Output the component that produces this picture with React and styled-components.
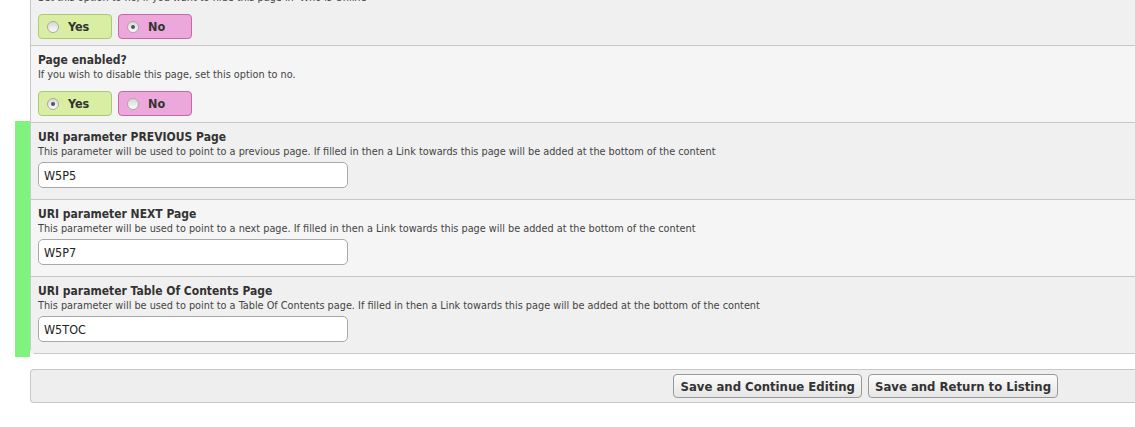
import React from 'react';
import styled, { createGlobalStyle, css } from 'styled-components';

const GlobalStyle = createGlobalStyle`
  html, body {
    margin: 0;
    padding: 0;
    background: #fff;
    overflow: hidden;
  }
  body {
    font-family: "DejaVu Sans Condensed", "DejaVu Sans", sans-serif;
    color: #333;
  }
`;

const Page = styled.div`
  box-sizing: border-box;
  margin-top: -31px;
  padding-left: 30px;
  width: 1170px;
`;

const Panel = styled.div`
  border-left: 1px solid #c8c8c8;
  border-bottom: 1px solid #c8c8c8;
  border-bottom-left-radius: 5px;
`;

// green "changed" strip beside the edited group of fields
const Marked = styled.div`
  position: relative;
  &::before {
    content: '';
    position: absolute;
    left: -16px;
    top: -2px;
    bottom: -4px;
    width: 15px;
    background: #80f27e;
  }
`;

const Row = styled.div`
  box-sizing: border-box;
  height: 77px;
  padding: 6px 8px 0 7px;
  background: ${(p) => (p.$alt ? '#f5f5f5' : '#f0f0f0')};
  border-bottom: 1px solid #c6c6c6;
  &:last-child {
    border-bottom: none;
    height: 76px;
  }
`;

const Title = styled.div`
  font-size: 12px;
  line-height: 16px;
  font-weight: bold;
  color: #333;
`;

const Desc = styled.div`
  font-size: 10.8px;
  line-height: 13px;
  color: #444;
  white-space: nowrap;
`;

const Options = styled.div`
  display: flex;
  gap: 6px;
  margin-top: 10px;
`;

const toneStyles = {
  yes: css`
    background: #d9eea2;
    border-color: #a9cb74;
  `,
  no: css`
    background: #eca8da;
    border-color: #c468a8;
  `,
};

const Choice = styled.label`
  box-sizing: border-box;
  display: flex;
  align-items: center;
  width: 74px;
  height: 25px;
  padding-left: 8px;
  border: 1px solid;
  border-radius: 4px;
  font-size: 12.5px;
  font-weight: bold;
  color: #333;
  ${(p) => toneStyles[p.$tone]}
`;

const Dot = styled.span`
  box-sizing: border-box;
  position: relative;
  width: 12px;
  height: 12px;
  margin-right: 9px;
  border-radius: 50%;
  border: 1px solid #a8a8a8;
  background: linear-gradient(#d8d8d8, #fafafa);
  ${(p) =>
    p.$on &&
    css`
      &::after {
        content: '';
        position: absolute;
        left: 3px;
        top: 3px;
        width: 4px;
        height: 4px;
        border-radius: 50%;
        background: #555;
      }
    `}
`;

const TextInput = styled.input`
  box-sizing: border-box;
  display: block;
  width: 310px;
  height: 26px;
  margin-top: 4px;
  padding: 0 5px;
  border: 1px solid #a9a9a9;
  border-radius: 5px;
  background: #fff;
  font-family: "DejaVu Sans Condensed", "DejaVu Sans", sans-serif;
  font-size: 12.5px;
  color: #222;
  outline: none;
`;

const Footer = styled.div`
  box-sizing: border-box;
  display: flex;
  justify-content: flex-end;
  gap: 6px;
  margin-top: 15px;
  height: 34px;
  padding: 4px 112px 0 0;
  background: #eeeeee;
  border: 1px solid #c8c8c8;
  border-right: none;
  border-radius: 4px 0 0 4px;
`;

const Button = styled.button`
  box-sizing: border-box;
  height: 24px;
  padding: 0 6px;
  border: 1px solid #999;
  border-radius: 4px;
  background: linear-gradient(#fbfbfb, #e6e6e6);
  font-family: "DejaVu Sans Condensed", "DejaVu Sans", sans-serif;
  font-size: 13px;
  font-weight: bold;
  color: #333;
`;

function RadioRow({ title, desc, value, alt }) {
  return (
    <Row $alt={alt}>
      <Title>{title}</Title>
      <Desc>{desc}</Desc>
      <Options>
        <Choice $tone="yes">
          <Dot $on={value} />
          Yes
        </Choice>
        <Choice $tone="no">
          <Dot $on={!value} />
          No
        </Choice>
      </Options>
    </Row>
  );
}

function InputRow({ title, desc, value, alt }) {
  return (
    <Row $alt={alt}>
      <Title>{title}</Title>
      <Desc>{desc}</Desc>
      <TextInput defaultValue={value} />
    </Row>
  );
}

const linkNote = 'If filled in then a Link towards this page will be added at the bottom of the content';

export default function App() {
  return (
    <React.Fragment>
      <GlobalStyle />
      <Page>
        <Panel>
          <RadioRow
            title="Hide in 'Who is Online'?"
            desc="Set this option to no, if you want to hide this page in 'Who is Online'"
            value={false}
          />
          <RadioRow
            title="Page enabled?"
            desc="If you wish to disable this page, set this option to no."
            value={true}
            alt
          />
          <Marked>
            <InputRow
              title="URI parameter PREVIOUS Page"
              desc={`This parameter will be used to point to a previous page. ${linkNote}`}
              value="W5P5"
            />
            <InputRow
              title="URI parameter NEXT Page"
              desc={`This parameter will be used to point to a next page. ${linkNote}`}
              value="W5P7"
              alt
            />
            <InputRow
              title="URI parameter Table Of Contents Page"
              desc={`This parameter will be used to point to a Table Of Contents page. ${linkNote}`}
              value="W5TOC"
            />
          </Marked>
        </Panel>
        <Footer>
          <Button>Save and Continue Editing</Button>
          <Button>Save and Return to Listing</Button>
        </Footer>
      </Page>
    </React.Fragment>
  );
}
